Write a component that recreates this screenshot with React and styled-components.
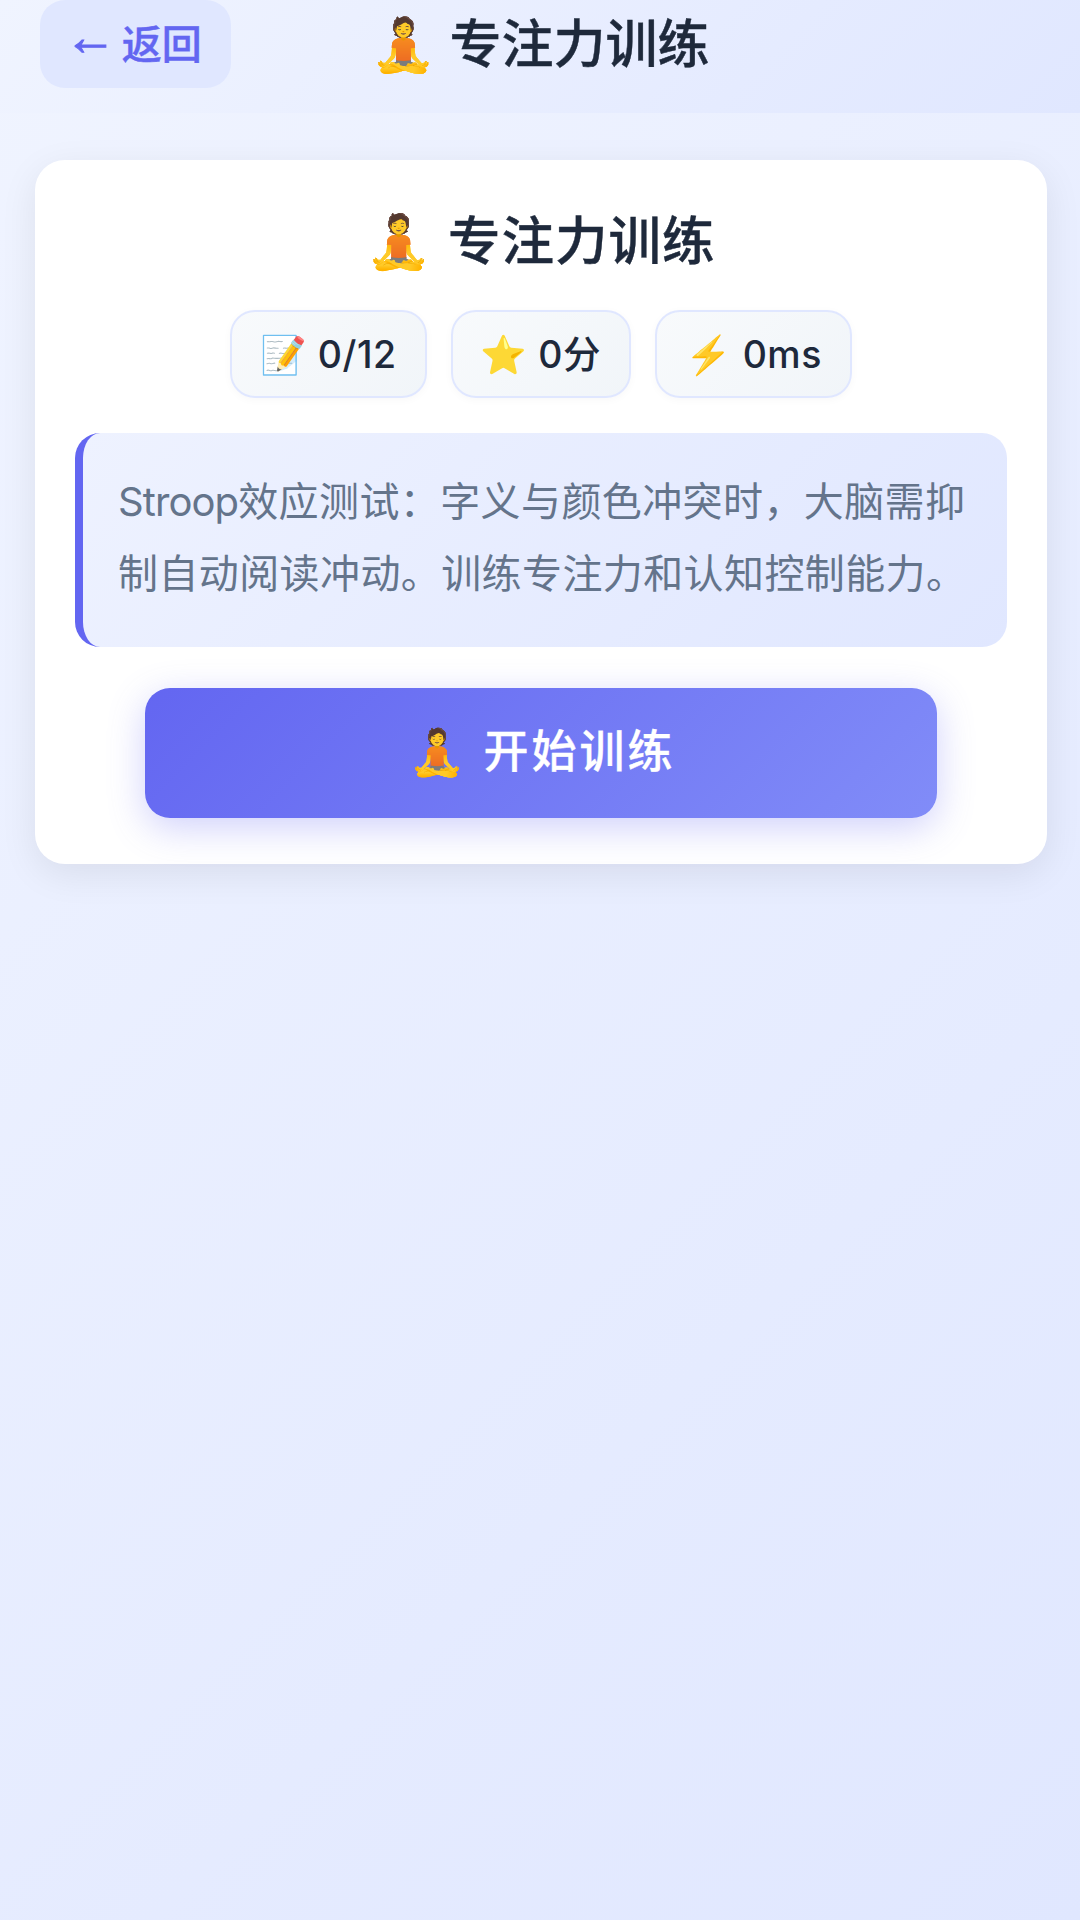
import React from "react";
import styled, { createGlobalStyle } from "styled-components";

const GlobalStyle = createGlobalStyle`
  html, body {
    margin: 0;
    padding: 0;
  }
  body {
    font-family: Inter, "Noto Sans CJK SC", "Noto Color Emoji", sans-serif;
    color: #1e293b;
  }
  * {
    box-sizing: border-box;
  }
`;

const Page = styled.div`
  width: 1080px;
  min-height: 1920px;
  background: linear-gradient(135deg, #f0f4ff 0%, #e0e7ff 100%);
`;

const Header = styled.header`
  height: 113px;
  padding: 0 40px;
  display: flex;
  background: linear-gradient(135deg, #f0f4ff 0%, #e0e7ff 100%);
  gap: 140px;
`;

const BackButton = styled.button`
  width: 191px;
  height: 88px;
  border: none;
  border-radius: 25px;
  background: #e0e7ff;
  color: #6366f1;
  font-family: inherit;
  font-size: 40px;
  font-weight: 500;
  line-height: 48px;
  padding: 0 5px 2px 0;
  -webkit-text-stroke: 0.4px #6366f1;
`;

const Arrow = styled.span`
  font-family: "Liberation Sans", sans-serif;
  font-size: 52px;
  font-weight: 700;
  line-height: 40px;
  letter-spacing: -5px;
  vertical-align: 4px;
  -webkit-text-stroke: 1px #6366f1;
`;

const HeaderTitle = styled.h1`
  margin: 0;
  height: 90px;
  line-height: 90px;
  font-size: 52px;
  font-weight: 500;
  -webkit-text-stroke: 0.4px #1e293b;
`;

const Content = styled.main`
  padding: 47px 33px 0 35px;
`;

const Card = styled.section`
  height: 704px;
  padding: 40px;
  background: #fff;
  border-radius: 30px;
  box-shadow: 0 10px 37px rgba(0, 0, 0, 0.08);
  display: flex;
  flex-direction: column;
  align-items: center;
`;

const CardTitle = styled.h2`
  margin: 0;
  height: 80px;
  padding-top: 6px;
  line-height: 70px;
  font-size: 52.5px;
  font-weight: 500;
  letter-spacing: 1px;
  -webkit-text-stroke: 0.4px #1e293b;
`;

const Stats = styled.div`
  margin-top: 30px;
  display: flex;
  gap: 24px;
`;

const Stat = styled.div`
  height: 88px;
  padding: 2px 28px 0;
  display: flex;
  align-items: center;
  border: 2.5px solid #e0e7ff;
  border-radius: 25px;
  background: linear-gradient(135deg, #f8fafc, #f1f5f9);
  box-shadow: 0 2px 8px rgba(0, 0, 0, 0.03);
  font-size: 37.5px;
  font-weight: 500;
  line-height: 46px;
  letter-spacing: 0.5px;
`;

const Info = styled.p`
  width: 932px;
  height: 214px;
  margin: 35px 0 0;
  padding: 33px 30px 0 35px;
  border-left: 8px solid #6366f1;
  border-radius: 25px;
  background: linear-gradient(135deg, #eef2ff, #e0e7ff);
  color: #64748b;
  font-size: 40px;
  line-height: 72px;
  letter-spacing: 0.4px;
`;

const LatinWord = styled.span`
  letter-spacing: -0.9px;
`;

const StartButton = styled.button`
  width: 792px;
  height: 130px;
  margin-top: 41px;
  padding: 0 0 10px 3px;
  border: none;
  border-radius: 25px;
  background: linear-gradient(135deg, #6366f1, #818cf8);
  box-shadow: 0 10px 37px rgba(99, 102, 241, 0.3);
  color: #fff;
  font-family: inherit;
  font-size: 45px;
  font-weight: 500;
  letter-spacing: 3px;
  -webkit-text-stroke: 0.3px #fff;
`;

const App = () => (
  <Page>
    <GlobalStyle />
    <Header>
      <BackButton>
        <Arrow>←</Arrow> 返回
      </BackButton>
      <HeaderTitle>🧘 专注力训练</HeaderTitle>
    </Header>
    <Content>
      <Card>
        <CardTitle>🧘 专注力训练</CardTitle>
        <Stats>
          <Stat>📝 0/12</Stat>
          <Stat>⭐ 0分</Stat>
          <Stat>⚡ 0ms</Stat>
        </Stats>
        <Info>
          <LatinWord>Stroop</LatinWord>效应测试：字义与颜色冲突时，大脑需抑制自动阅读冲动。训练专注力和认知控制能力。
        </Info>
        <StartButton>🧘 开始训练</StartButton>
      </Card>
    </Content>
  </Page>
);

export default App;
